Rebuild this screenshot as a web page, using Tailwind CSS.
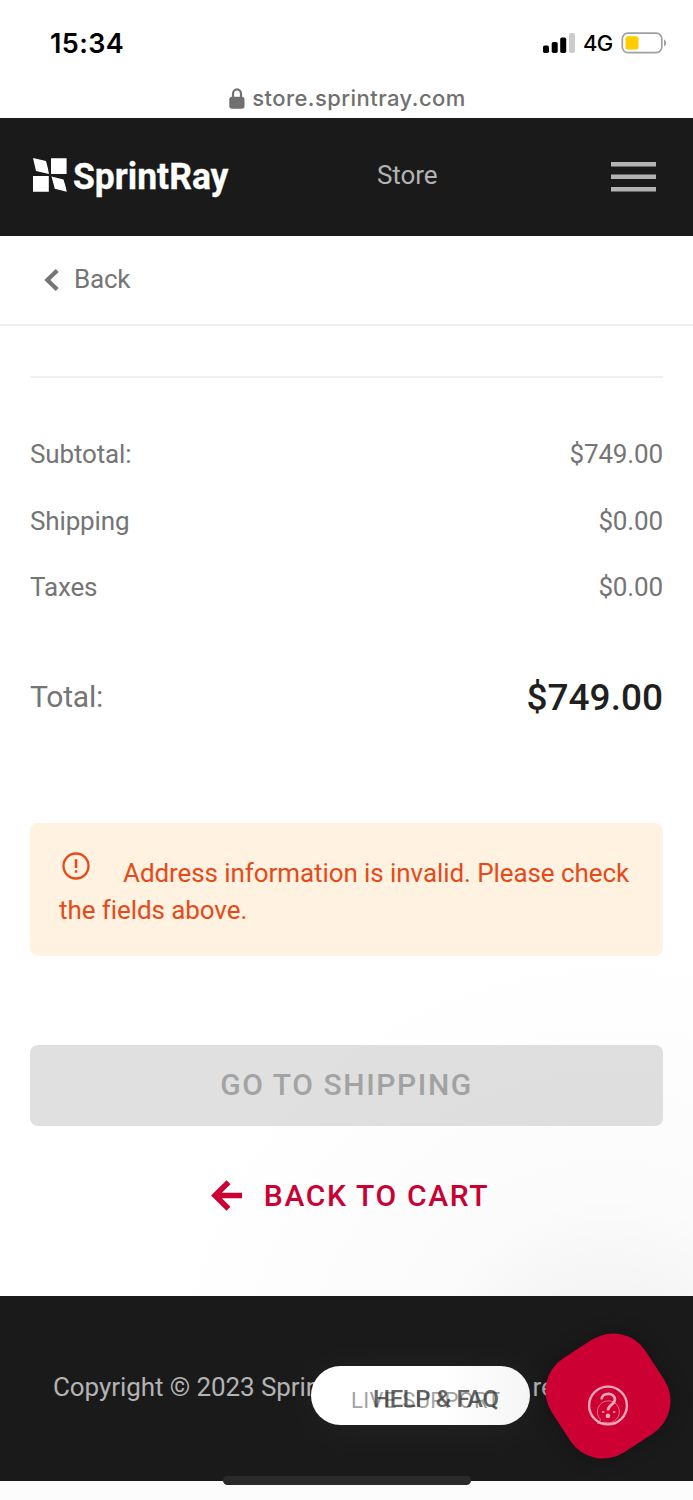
<!DOCTYPE html>
<html lang="en">
<head>
    <meta charset="UTF-8">
    <meta name="viewport" content="width=device-width, initial-scale=1.0">
    <title>SprintRay Store</title>
    <script src="https://cdn.jsdelivr.net/npm/@tailwindcss/browser@4"></script>
</head>
<body class="overflow-hidden bg-white font-['Roboto',sans-serif] text-[#757575]">
    <div class="main relative flex flex-col h-[1500px] w-[693px] overflow-hidden">
        <!-- phone status bar -->
        <div class="status flex flex-row items-center justify-between h-[84px] pl-[50px] pr-[26px] text-black font-['Inter',sans-serif]">
            <div class="text-[27px] font-semibold leading-none mt-[2px] tracking-[0.4px]">15:34</div>
            <div class="flex flex-row items-center mt-[2px]">
                <svg width="32" height="20" viewBox="0 0 32 20">
                    <rect x="0" y="12.5" width="6" height="7.5" rx="1.8"/>
                    <rect x="8.7" y="9" width="6" height="11" rx="1.8"/>
                    <rect x="17.2" y="4.5" width="6" height="15.5" rx="1.8"/>
                    <rect x="26" y="0" width="6" height="20" rx="1.8" fill="#cccccc"/>
                </svg>
                <div class="text-[22px] font-medium leading-none ml-[8px] w-[38px] tracking-[-0.6px]">4G</div>
                <svg width="46" height="22" viewBox="0 0 46 22">
                    <rect x="1.3" y="1.2" width="39.500" height="19.4" rx="5.5" fill="none" stroke="#a0a0a0" stroke-width="1.7"/>
                    <rect x="4.500" y="4.2" width="13" height="13.2" rx="2.5" fill="#ffcc00"/>
                    <path d="M43 7.5c2.8 1 2.8 6 0 7z" fill="#a0a0a0"/>
                </svg>
            </div>
        </div>
        <div class="address flex flex-row items-center justify-center h-[34px] pb-[6px] pl-[2px] gap-[7px] text-[#707070] font-['Inter',sans-serif]">
            <svg width="16" height="21" viewBox="0 0 16 21">
                <path d="M4 10V6a4 4.6 0 0 1 8 0v4" fill="none" stroke="#707070" stroke-width="2.2"/>
                <rect x="0.3" y="8.7" width="15.2" height="12" rx="2.6" fill="#707070"/>
            </svg>
            <div class="text-[22px] font-medium leading-none tracking-[0.45px]">store.sprintray.com</div>
        </div>

        <header class="flex flex-row items-center h-[118px] bg-[#1a1a1a] pl-[33px] pr-[37px]">
            <svg width="200" height="50" viewBox="33 152 200 50" fill="#fff">
                <path d="M33 158l13 3q2 7 3 13l-13-3zM51 158.3h15.6v15.6H51zM33 176h15.8v15.8H33zM51.500 176.500l12 3q2 6 3.300 12.300l-12-3z"/>
                <text x="73" y="189" font-family="Roboto" font-weight="700" font-size="36.500" textLength="155.500" lengthAdjust="spacingAndGlyphs" stroke="#fff" stroke-width=".3">SprintRay</text>
            </svg>
            <div class="text-[26px] text-[#b3b3b3] leading-none ml-[144px] pb-[4px] tracking-[-0.1px]">Store</div>
            <svg class="ml-auto" width="45" height="30" viewBox="0 0 45 30" fill="#b3b3b3">
                <path d="M0 0h45v4.500H0zM0 12.500h45v4.500H0zM0 25h45v4.500H0z"/>
            </svg>
        </header>

        <div class="back flex flex-row items-center h-[90px] border-b-2 border-[#eeeeee] pl-[44px]">
            <svg width="15" height="22" viewBox="0 0 15 22" fill="none" stroke="#757575" stroke-width="4.200"><path d="M13.200 1.500L3.300 11l9.900 9.500"/></svg>
            <div class="text-[26px] leading-none ml-[15px] pb-[3px] tracking-[-0.2px]">Back</div>
        </div>

        <main class="flex flex-col h-[970px] px-[30px]">
            <div class="mt-[50px] h-[2px] bg-[#f0f0f0]"></div>
            <div class="prices flex flex-col mt-[43.5px] text-[26px] tracking-[-0.14px]">
                <div class="flex flex-row items-center justify-between h-[66.5px]"><span>Subtotal:</span><span>$749.00</span></div>
                <div class="flex flex-row items-center justify-between h-[66.5px]"><span>Shipping</span><span>$0.00</span></div>
                <div class="flex flex-row items-center justify-between h-[66.5px]"><span>Taxes</span><span>$0.00</span></div>
            </div>
            <div class="flex flex-row items-center justify-between h-[60px] mt-[45.5px]">
                <span class="text-[30px] tracking-[-0.2px]">Total:</span>
                <span class="text-[37px] font-medium text-[#1f1f1f] pt-[3px]">$749.00</span>
            </div>
            <div class="alert h-[133px] mt-[96px] shrink-0 rounded-lg bg-[#fff2e0] text-[#e64a19] text-[26px] leading-[37px] tracking-[-0.08px] pl-[29px] pt-[32px]">
                <svg class="inline-block align-top ml-[3px] mr-[33px] -mt-[3px]" width="28" height="28" viewBox="0 0 28 28">
                    <circle cx="14" cy="14" r="12.500" fill="none" stroke="#e64a19" stroke-width="2.300"/>
                    <path d="M12.800 7.300h2.500v8.700h-2.500zM12.800 18.200h2.500v2.500h-2.500z" fill="#e64a19"/>
                </svg>Address information is invalid. Please check<br>the fields above.
            </div>
            <button class="h-[81px] mt-[89px] shrink-0 rounded-lg bg-[#e0e0e0] text-[#a3a3a3] text-[30px] font-medium tracking-[1.6px] pb-[2px]">GO TO SHIPPING</button>
            <a class="flex flex-row items-center justify-center h-[60px] mt-[40px] pl-[7px] gap-[22px] text-[#cc0033]">
                <svg width="31" height="31" viewBox="0 0 31 31" fill="none" stroke="#cc0033" stroke-width="5.500"><path d="M17.500 2.200L4 15.500l13.500 13.300M4 15.500h27"/></svg>
                <span class="text-[30px] font-medium tracking-[1.65px]">BACK TO CART</span>
            </a>
        </main>

        <footer class="h-[184.500px] bg-[#1a1a1a] text-[#b3b3b3] text-[26px] tracking-[-0.08px] pl-[53px] pt-[72px] whitespace-nowrap">Copyright © 2023 SprintRay Inc. All rights reserved</footer>
        <div class="grow bg-[#fcfcfc]"></div>

        <!-- soft shade around the chat widget -->
        <div class="absolute inset-x-0 top-0 h-[1296px] bg-[radial-gradient(circle_at_608px_1396px,#0000000c_80px,#00000004_200px,#00000002_340px,#00000000_460px)]"></div>

        <!-- chat widget -->
        <div class="absolute left-[311px] top-[1366px] h-[59px] w-[219px] rounded-full bg-linear-to-r from-white from-60% to-[#f5f5f5] shadow-[0_4px_50px_#ffffff0c] text-[22px] leading-none text-[#333333]">
            <span class="absolute left-[40px] top-[24px] opacity-45 tracking-[0.3px] whitespace-nowrap">LIVE SUPPORT</span>
            <span class="absolute left-[62px] top-[21px] opacity-75 text-[24px] font-medium tracking-[-0.4px] whitespace-nowrap">HELP &amp; FAQ</span>
        </div>
        <div class="absolute left-[552px] top-[1340px] h-[112px] w-[112px] rounded-[39px] bg-[#cc0033] -rotate-33 shadow-[0_0_20px_#00000040]"></div>
        <svg class="absolute left-[587px] top-[1384px]" width="42" height="42" viewBox="0 0 42 42" fill="none" stroke="#f2a6b8">
            <circle cx="21" cy="21.500" r="18.900" stroke-width="2.400"/>
            <path d="M14.500 15.300c.5-7.500 13.400-7.300 13.400.3 0 5.400-6.900 4.800-6.900 11" stroke-width="2.700"/>
            <circle cx="21" cy="31.900" r="2.300" fill="#f2a6b8" stroke="none"/>
            <path d="M13.500 35.500a11 11 0 1 1 4 2.600c-2 1-4.500 1.500-7.300 1 1.700-.8 2.900-2 3.300-3.600z" stroke-width="1" opacity=".65"/>
            <path d="M15 27h2.400v2H15zM26 27h2.400v2H26z" fill="#f2a6b8" stroke="none" opacity=".75"/>
        </svg>
        <div class="absolute left-[223px] top-[1476px] h-[9px] w-[248px] rounded-full bg-[#2a2a2a]"></div>
    </div>
</body>
</html>
